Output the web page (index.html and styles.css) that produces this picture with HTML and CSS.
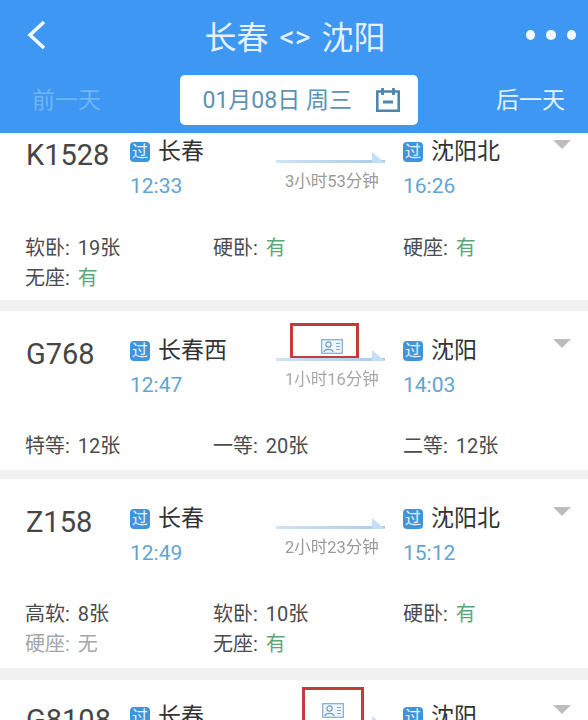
FILE: index.html
```html
<!DOCTYPE html>
<html lang="zh-CN">
<head>
<meta charset="utf-8">
<title>长春 &lt;&gt; 沈阳</title>
<link rel="stylesheet" href="styles.css">
</head>
<body>
<div class="page">
  <header class="header">
    <div class="topbar">
      <svg class="back" width="22" height="30" viewBox="0 0 22 30"><path d="M19 2 L5 15 L19 28" fill="none" stroke="#f4f8fc" stroke-width="3.600"/></svg>
      <h1 class="title"><span>长春</span><span class="swap">&lt;&gt;</span><span>沈阳</span></h1>
      <div class="dots"><i></i><i></i><i></i></div>
    </div>
    <div class="datebar">
      <span class="prev">前一天</span>
      <div class="date">
        <span class="date-text">01月08日 周三</span>
        <svg width="24" height="24" viewBox="0 0 24 24"><path d="M1.300 3.500H22.700V22.700H1.300Z" fill="none" stroke="#4a86ad" stroke-width="2.600"/><path d="M6.500 0V7M17.500 0V7" stroke="#4a86ad" stroke-width="2.800"/><path d="M7 14H17" stroke="#4a86ad" stroke-width="3"/></svg>
      </div>
      <span class="next">后一天</span>
    </div>
  </header>

  <main class="list">
    <section class="card card-first">
      <div class="route">
        <div class="code">K1528</div>
        <div class="stop"><div class="name"><b class="pass">过</b>长春</div><div class="time">12:33</div></div>
        <div class="mid"><div class="arrow"><i></i></div><div class="dur">3小时53分钟</div></div>
        <div class="stop"><div class="name"><b class="pass">过</b>沈阳北</div><div class="time">16:26</div></div>
        <div class="tri"></div>
      </div>
      <div class="seats">
        <div>软卧: <span class="n">19张</span></div><div>硬卧: <span class="y">有</span></div><div>硬座: <span class="y">有</span></div>
        <div>无座: <span class="y">有</span></div>
      </div>
    </section>

    <section class="card card-second">
      <div class="route">
        <div class="code">G768</div>
        <div class="stop"><div class="name"><b class="pass">过</b>长春西</div><div class="time">12:47</div></div>
        <div class="mid">
          <div class="mark mark-a"><svg class="idc" width="22" height="15" viewBox="0 0 22 15"><rect x=".7" y=".7" width="20.600" height="13.600" fill="#eef5fc" stroke="#7fa9cf" stroke-width="1.200"/><circle cx="7.500" cy="5.500" r="2.600" fill="none" stroke="#6f9fc9" stroke-width="1.200"/><path d="M3 13c.5-3.500 8.500-3.500 9 0" fill="none" stroke="#6f9fc9" stroke-width="1.200"/><path d="M15 4.500h4M15 7.500h4M15 10.500h4" stroke="#7fa9cf"/></svg></div>
          <div class="arrow"><i></i></div><div class="dur dur-pale">1小时16分钟</div>
        </div>
        <div class="stop"><div class="name"><b class="pass">过</b>沈阳</div><div class="time">14:03</div></div>
        <div class="tri"></div>
      </div>
      <div class="seats">
        <div>特等: <span class="n">12张</span></div><div>一等: <span class="n">20张</span></div><div>二等: <span class="n">12张</span></div>
      </div>
    </section>

    <section class="card card-third">
      <div class="route">
        <div class="code">Z158</div>
        <div class="stop"><div class="name"><b class="pass">过</b>长春</div><div class="time">12:49</div></div>
        <div class="mid"><div class="arrow"><i></i></div><div class="dur">2小时23分钟</div></div>
        <div class="stop"><div class="name"><b class="pass">过</b>沈阳北</div><div class="time">15:12</div></div>
        <div class="tri"></div>
      </div>
      <div class="seats">
        <div>高软: <span class="n">8张</span></div><div>软卧: <span class="n">10张</span></div><div>硬卧: <span class="y">有</span></div>
        <div class="none">硬座: <span class="n-none">无</span></div><div>无座: <span class="y">有</span></div>
      </div>
    </section>

    <section class="card card-last">
      <div class="route">
        <div class="code">G8108</div>
        <div class="stop"><div class="name"><b class="pass">过</b>长春</div></div>
        <div class="mid">
          <div class="mark mark-b"><svg class="idc" width="22" height="15" viewBox="0 0 22 15"><rect x=".7" y=".7" width="20.600" height="13.600" fill="#eef5fc" stroke="#7fa9cf" stroke-width="1.200"/><circle cx="7.500" cy="5.500" r="2.600" fill="none" stroke="#6f9fc9" stroke-width="1.200"/><path d="M3 13c.5-3.500 8.500-3.500 9 0" fill="none" stroke="#6f9fc9" stroke-width="1.200"/><path d="M15 4.500h4M15 7.500h4M15 10.500h4" stroke="#7fa9cf"/></svg></div>
          <div class="arrow"><i></i></div>
        </div>
        <div class="stop"><div class="name"><b class="pass">过</b>沈阳</div></div>
        <div class="tri"></div>
      </div>
    </section>
  </main>
</div>
</body>
</html>
```
FILE: styles.css
```css
* { box-sizing: border-box; margin: 0; padding: 0; }
html, body { width: 588px; height: 720px; overflow: hidden; background: #f1f1f1; }
body { font-family: Roboto, "Noto Sans CJK SC", sans-serif; color: #4a4a4a; }
.page { height: 720px; overflow: hidden; filter: blur(.6px); }

.header { height: 133px; background: #3d97f3; color: #fff; }
.topbar { height: 75px; display: flex; align-items: center; justify-content: space-between; padding: 0 12px 6px 25px; }
.title { display: flex; gap: 11px; margin-top: 6px; margin-left: 17px; font-size: 32px; font-weight: 400; line-height: 40px; color: #e4f1fb; }
.swap { font-size: 30px; font-family: Roboto, sans-serif; line-height: 38px; }
.dots { display: flex; gap: 11px; width: 50px; }
.dots i { width: 10px; height: 10px; border-radius: 50%; background: #f4f8fc; }
.datebar { display: flex; align-items: center; justify-content: space-between; padding: 0 23px 0 32px; height: 50px; }
.prev, .next { font-size: 23px; padding-bottom: 4px; }
.prev { color: #6fb6f3; }
.next { color: #e6f2fb; }
.date { width: 238px; height: 50px; background: #fff; border-radius: 5px; display: flex; align-items: center; gap: 24px; padding-left: 23px; font-size: 23px; color: #5d91b5; }
.date-text { padding-bottom: 4px; white-space: nowrap; }

.list { display: flex; flex-direction: column; gap: 11px; }
.card { background: #fff; position: relative; padding: 22px 0 0 26px; }
.card-first { height: 167px; padding-top: 1px; }
.card-second { height: 159px; }
.card-third { height: 189px; margin-top: -2px; }
.card-last { height: 60px; margin-top: 1px; padding-top: 19px; }

.route { display: grid; grid-template-columns: 104px 147px 126px 150px 1fr; height: 74px; }
.code { font-size: 29px; line-height: 40px; padding-top: 1px; color: #454545; }
.name { display: flex; align-items: center; gap: 8px; font-size: 23px; line-height: 36px; color: #333; }
.pass { width: 20px; height: 20px; border-radius: 4px; background: #3f95dc; color: #e8f4fc; font-size: 16px; font-weight: 400; line-height: 20px; text-align: center; }
.time { font-size: 21px; line-height: 30px; margin-top: 1px; color: #62a4d2; }
.mid { position: relative; padding-top: 17px; margin-left: -1px; }
.card-first .mid { padding-top: 18px; }
.arrow { width: 109px; height: 11px; position: relative; }
.arrow::before { content: ""; position: absolute; left: 0; right: 0; bottom: 0; height: 3px; background: linear-gradient(90deg, #cfe3f5, #a9cbe8); }
.arrow i { position: absolute; right: 0; bottom: 0; width: 0; height: 0; border-right: 13px solid transparent; border-bottom: 11px solid #c4def5; }
.dur { font-size: 16.500px; line-height: 20px; margin-top: 9px; margin-left: 9px; white-space: nowrap; color: #9a9a9a; }
.dur-pale { color: #a8a8a8; }
.tri { width: 0; height: 0; margin: 6px 0 0 0; border-left: 9px solid transparent; border-right: 9px solid transparent; border-top: 9px solid #bdbdbd; }

.mark { position: absolute; background: #fff; border: 3px solid #c33c3c; display: flex; align-items: flex-end; justify-content: flex-end; padding: 0 13px 2px 0; }
.mark-a { left: 14px; top: -10px; width: 69px; height: 36px; }
.mark-b { left: 26px; top: -12px; width: 62px; height: 60px; align-items: flex-start; justify-content: center; padding: 13px 0 0; }

.seats { display: grid; grid-template-columns: 188px 190px 1fr; margin-left: -1px; margin-top: 25px; font-size: 20px; line-height: 30px; color: #4c4c4c; }
.card-second .seats { margin-top: 24px; }
.card-third .seats { margin-top: 24px; }
.n, .y, .n-none { margin-left: 3px; }
.y { color: #5aa877; }
.none { color: #a6a6a6; }
```
